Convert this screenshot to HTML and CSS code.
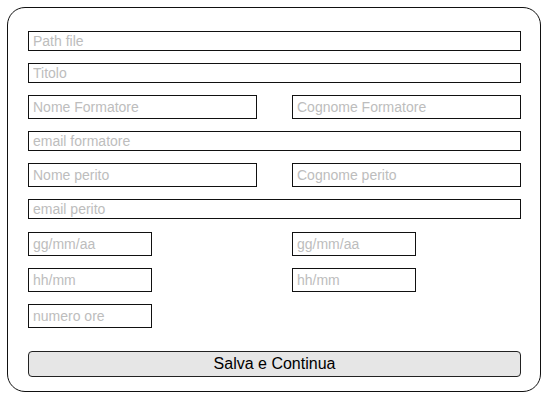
FILE: index.html
```html
<!DOCTYPE html>
<html lang="it">
<head>
    <meta charset="UTF-8">
    <title>Dati corso</title>
    <link rel="stylesheet" href="styles.css">
</head>
<body>
  <form class="pannello">
    <input type="text" class="campo campo-pieno" placeholder="Path file">
    <input type="text" class="campo campo-pieno" placeholder="Titolo">

    <div class="riga-doppia">
      <input type="text" class="campo campo-alto" placeholder="Nome Formatore">
      <input type="text" class="campo campo-alto" placeholder="Cognome Formatore">
    </div>

    <input type="text" class="campo campo-pieno" placeholder="email formatore">

    <div class="riga-doppia">
      <input type="text" class="campo campo-alto" placeholder="Nome perito">
      <input type="text" class="campo campo-alto" placeholder="Cognome perito">
    </div>

    <input type="text" class="campo campo-pieno" placeholder="email perito">

    <div class="riga-doppia riga-date">
      <input type="text" class="campo campo-corto" placeholder="gg/mm/aa">
      <input type="text" class="campo campo-corto" placeholder="gg/mm/aa">
    </div>

    <div class="riga-doppia">
      <input type="text" class="campo campo-corto" placeholder="hh/mm">
      <input type="text" class="campo campo-corto" placeholder="hh/mm">
    </div>

    <div class="riga-doppia">
      <input type="text" class="campo campo-corto" placeholder="numero ore">
    </div>

    <button type="button" class="btn-salva">Salva e Continua</button>
  </form>
</body>
</html>
```

FILE: styles.css
```css
* {
    box-sizing: border-box;
    margin: 0;
    padding: 0;
}

body {
    font-family: "Liberation Sans", Arial, sans-serif;
    background-color: #fff;
}

.pannello {
    margin: 7px;
    width: 534px;
    height: 385px;
    border: 1px solid #111;
    border-radius: 18px;
    padding: 23px 19px 13px 20px;
    display: flex;
    flex-direction: column;
    gap: 12px;
}

.campo {
    display: block;
    width: 100%;
    height: 20px;
    border: 1px solid #111;
    padding: 1px 4px;
    font-family: inherit;
    font-size: 14px;
    color: #333;
    background: #fff;
    outline: none;
}

.campo::placeholder {
    color: #bdbdbd;
}

.campo-alto {
    height: 24px;
}

.campo-corto {
    width: 124px;
    height: 24px;
}

.riga-doppia {
    display: grid;
    grid-template-columns: 1fr 1fr;
    column-gap: 35px;
}

.riga-date {
    margin-top: 1px;
}

.btn-salva {
    margin-top: 11px;
    height: 26px;
    width: 100%;
    border: 1px solid #222;
    border-radius: 4px;
    background: #e6e6e6;
    font-family: inherit;
    font-size: 16px;
    color: #000;
    cursor: pointer;
}
```
